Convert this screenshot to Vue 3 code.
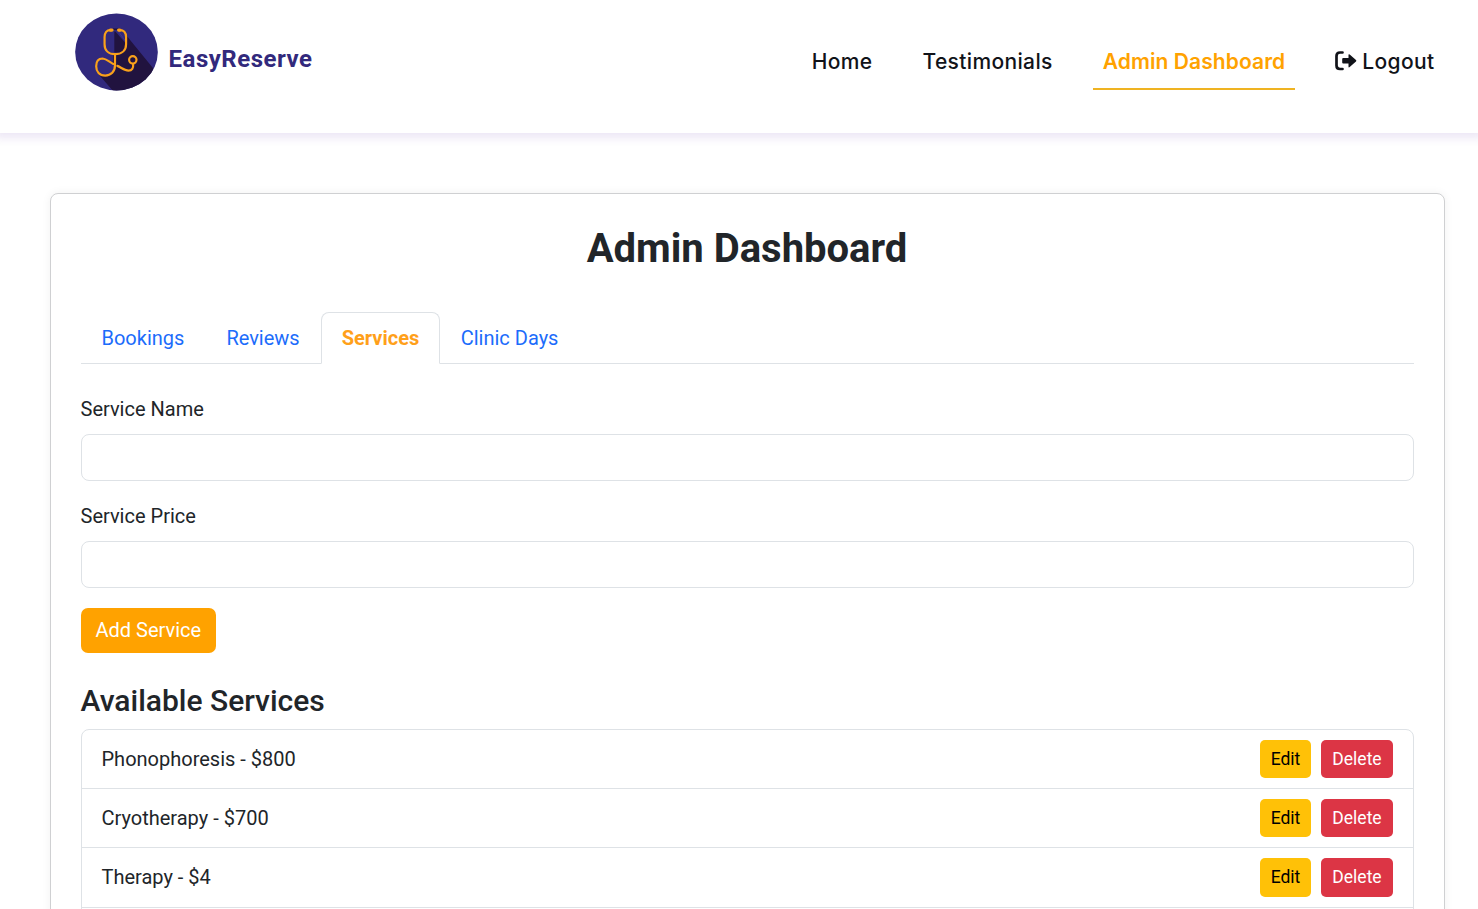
<script setup>
const navItems = [
  { label: 'Home', cls: 'home' },
  { label: 'Testimonials', cls: 'testimonials' },
  { label: 'Admin Dashboard', cls: 'active' },
  { label: 'Logout', cls: 'logout', icon: true },
]
const tabs = ['Bookings', 'Reviews', 'Services', 'Clinic Days']
const fields = ['Service Name', 'Service Price']
const services = [
  { name: 'Phonophoresis', price: 800 },
  { name: 'Cryotherapy', price: 700 },
  { name: 'Therapy', price: 4 },
]
</script>

<template>
  <div class="page">
    <header class="header">
      <a class="brand">
        <svg class="logo" viewBox="15 15 247 233" preserveAspectRatio="none">
          <defs>
            <clipPath id="disc"><ellipse cx="138.500" cy="131.500" rx="123" ry="115" /></clipPath>
          </defs>
          <g clip-path="url(#disc)">
            <rect x="15" y="15" width="247" height="233" fill="#31297d" />
            <path d="M128 61 L151 61 L262 198 L262 250 L130 250 L80 192 L106 165 L128 160 Z" fill="#21133f" />
            <path d="M106 76 Q108 68 123 66 L151 66 L168 82 L168 120 Q160 136 137 137 Q107 136 105 110 Z" fill="#31297d" />
            <path d="M135 70 L166 105 L166 120 Q158 132 137 134 L132 132 L132 70 Z" fill="#21133f" />
            <path d="M144 70 L167 101" stroke="#4b4091" stroke-width="2" />
            <path d="M80 180 Q78 151 96 151 L134 171 L132 186 Q126 201 107 201 Q87 201 80 180 Z" fill="#31297d" />
          </g>
          <g fill="none" stroke="#f9a11b" stroke-width="6.500" stroke-linecap="round" stroke-linejoin="round">
            <path d="M122 66 C109 65 103 74 103 87 V108 C103 127 115 138 134 138 C154 138 167 127 167 108 V87 C167 74 160 65 147 66" />
            <path d="M134 138 V171 C134 190 122 202 105 202 C88 202 78 190 78 174 C78 158 86 151 97 151 C110 152 117 162 129 167" />
            <path d="M141 173 C152 177 162 187 174 187 C185 187 189 179 188 169" />
            <circle cx="187" cy="155" r="11" />
            <path d="M120 66 H125 M145 66 H149" stroke-width="10" />
          </g>
        </svg>
        <span class="brand-name">EasyReserve</span>
      </a>
      <nav class="nav">
        <a v-for="item in navItems" :key="item.label" class="nav-link" :class="item.cls">
          <svg v-if="item.icon" class="exit" viewBox="0 0 22 20">
            <path d="M7.500 1.500 H5 Q1.500 1.500 1.500 5 V14.500 Q1.500 18 5 18 H7.500" fill="none" stroke="#111319" stroke-width="2.700" stroke-linecap="round" />
            <path d="M8.200 7 H13.500 V4 Q13.500 2.600 14.700 3.500 L21 9 Q21.700 9.800 21 10.600 L14.700 16 Q13.500 17 13.500 15.500 V12.600 H8.200 Q7.200 12.600 7.200 11.600 V8 Q7.200 7 8.200 7 Z" fill="#111319" />
          </svg>
          <span class="nav-text">{{ item.label }}</span>
        </a>
      </nav>
    </header>

    <main class="card">
      <h1>Admin Dashboard</h1>
      <ul class="tabs">
        <li v-for="tab in tabs" :key="tab" class="tab" :class="{ current: tab === 'Services' }">{{ tab }}</li>
      </ul>
      <form class="form" @submit.prevent>
        <div v-for="field in fields" :key="field" class="field">
          <label>{{ field }}</label>
          <input type="text" :aria-label="field" />
        </div>
        <button class="add">Add Service</button>
      </form>
      <h2>Available Services</h2>
      <ul class="list">
        <li v-for="service in services" :key="service.name" class="row">
          <span class="service">{{ service.name }} - ${{ service.price }}</span>
          <div class="actions">
            <button class="small edit">Edit</button>
            <button class="small delete">Delete</button>
          </div>
        </li>
      </ul>
    </main>
  </div>
</template>

<style>
body { margin: 0; overflow: hidden; }
</style>

<style scoped>
* { box-sizing: border-box; }
.page { height: 909px; overflow: hidden; background: #fff; color: #212529; font-family: Roboto, sans-serif; font-size: 20px; }
.header { height: 133px; display: flex; justify-content: space-between; align-items: flex-start; padding: 13px 33.5px 0 75px; background: #fff; box-shadow: 0 0 9px 5px rgba(84, 25, 160, 0.11); }
.brand { display: flex; }
.logo { display: block; width: 83px; height: 78px; }
.brand-name { margin: 31px 0 0 10.5px; line-height: 30px; font-size: 24px; font-weight: 700; letter-spacing: 0.52px; color: #32297c; }
.nav { display: flex; gap: 30px; padding-top: 20px; }
.nav-link { display: flex; align-items: center; height: 57px; padding: 2px 10px 0; border-bottom: 2px solid transparent; font-family: Inter, sans-serif; font-size: 21px; font-weight: 500; letter-spacing: 0.36px; color: #111319; white-space: nowrap; }
.nav-link.active { color: #ffa200; font-weight: 600; letter-spacing: 0.08px; border-color: #efb322; }
.exit { width: 22px; height: 20px; margin: -1px 5px 0 0; }
.card { width: 1395px; height: 900px; margin: 60px 0 0 50px; padding: 30px; border: 1px solid #cfd0d2; border-radius: 8px; background: #fff; box-shadow: 0 0 10px rgba(0, 0, 0, 0.06); }
h1 { margin: 0; padding-top: 1px; height: 48px; line-height: 48px; text-align: center; text-indent: -1px; font-size: 40px; font-weight: 700; }
ul { list-style: none; margin: 0; padding: 0; }
.tabs { display: flex; margin-top: 40px; height: 52px; border-bottom: 1px solid #dee2e6; }
.tab { height: 52px; padding: 0 20.5px 0 20px; border: 1px solid transparent; line-height: 50px; text-indent: -0.5px; color: #1c6cfb; }
.tab.current { width: 119px; background: #fff; color: #ffa01a; font-weight: 700; border-color: #dee2e6 #dee2e6 #fff; border-radius: 8px 8px 0 0; }
.form { margin-top: 30px; }
.field { margin-bottom: 20px; }
label { display: block; height: 30px; line-height: 30px; margin-bottom: 10px; text-indent: -0.5px; }
input { display: block; width: 100%; height: 47px; border: 1px solid #dee2e6; border-radius: 8px; background: #fff; }
button { display: block; border: 0; font-family: inherit; white-space: nowrap; }
.add { width: 135px; height: 45px; padding: 0 0 1px; border-radius: 7px; background: #ffa200; color: #fff; font-size: 20px; text-indent: -0.5px; }
h2 { margin: 30px 0 10px; height: 36px; line-height: 36px; font-size: 30px; font-weight: 500; text-indent: -0.5px; }
.list { height: 240px; border: 1px solid #dee2e6; border-radius: 8px; }
.row { display: flex; align-items: center; justify-content: space-between; height: 59px; padding: 0 20px; border-bottom: 1px solid #dee2e6; }
.row:last-child { height: 60px; }
.service { display: block; line-height: 30px; text-indent: -0.5px; }
.row:last-child .service { padding-bottom: 1px; }
.actions { display: flex; gap: 10px; }
.small { height: 38px; padding: 0; border-radius: 5px; font-size: 17.5px; }
.row:last-child .small { height: 39px; padding-bottom: 1px; }
.edit { width: 51px; background: #ffc107; color: #000; }
.delete { width: 72px; background: #dc3545; color: #fff; }
</style>
